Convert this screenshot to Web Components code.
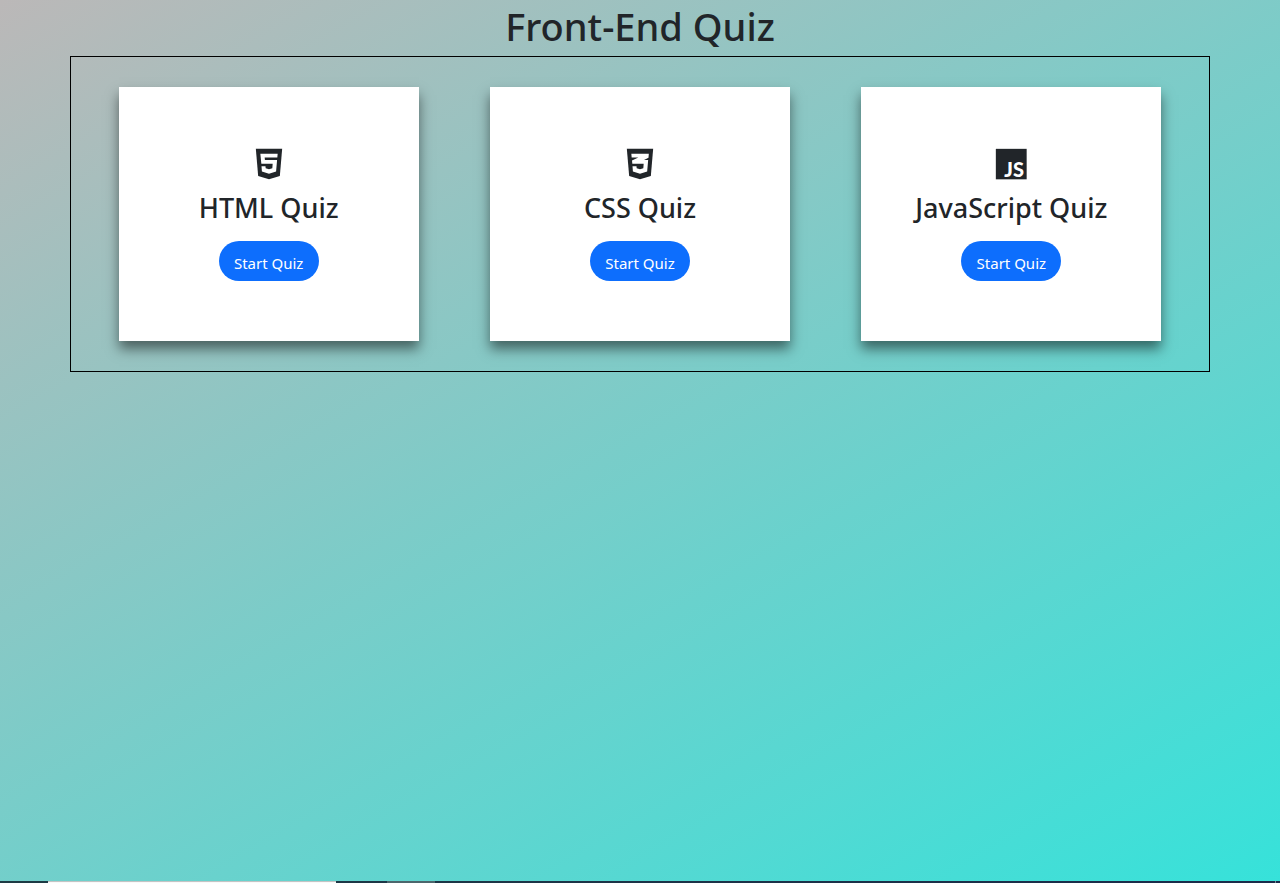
<!DOCTYPE html>
<html lang="en">
<head>
<meta charset="utf-8">
<meta name="viewport" content="width=device-width, initial-scale=1">
<title>Front-End Quiz</title>
<style>
body { margin: 0; color: #212529; font-family: "Noto Sans", "Open Sans", sans-serif; font-size: 16px; }
</style>
</head>
<body>
<quiz-app>
  <quiz-card icon="html">HTML Quiz</quiz-card>
  <quiz-card icon="css">CSS Quiz</quiz-card>
  <quiz-card icon="js">JavaScript Quiz</quiz-card>
</quiz-app>
<script>
const SHIELD = 'M4.1 2.8h15.8l-1.4 16.4-6.5 1.9-6.5-1.9z';
const ICONS = {
  html: `<path fill="currentColor" d="${SHIELD}"/><path fill="#fff" d="M6.8 5.9h10.4l-.2 2.2H9.4l.15 1.5h7.3l-.6 6.9-4.25 1.3-4.25-1.3-.25-3.1h2.4l.1 1.2 2 .6 2-.6.2-2.7H7.4z"/>`,
  css: `<path fill="currentColor" d="${SHIELD}"/><path fill="#fff" d="M6.8 5.9h10.5l-.2 2.4-2.7 1.3h2.5l-.6 6.9-4.3 1.3-4.25-1.3-.25-3.1h2.4l.1 1.2 2 .6 2-.6.2-2.7H7.4l-.2-2L11 8.1H7z"/>`,
  js: `<path fill="currentColor" d="M2.9 2.9h18.5v18.3H2.9z"/><text x="8" y="19.8" fill="#fff" font-family="Lato, sans-serif" font-weight="900" font-size="12">JS</text>`
};

class QuizIcon extends HTMLElement {
  connectedCallback() {
    const root = this.shadowRoot || this.attachShadow({ mode: 'open' });
    root.innerHTML = `
      <style>
        :host { display: block; width: 36px; height: 36px; }
        svg { display: block; width: 100%; height: 100%; }
      </style>
      <svg viewBox="1.2 1.8 21.6 21.6" aria-hidden="true">${ICONS[this.getAttribute('name')] || ''}</svg>`;
  }
}
customElements.define('quiz-icon', QuizIcon);

class QuizCard extends HTMLElement {
  connectedCallback() {
    const root = this.shadowRoot || this.attachShadow({ mode: 'open' });
    root.innerHTML = `
      <style>
        :host {
          display: flex; flex-direction: column; align-items: center; box-sizing: border-box;
          width: 100%; max-width: 300px; padding: 60px 16px;
          background: #fff; box-shadow: 0 8px 12px rgba(0, 0, 0, .5);
        }
        h3 { margin: 8px 0 16px; font-size: 27px; line-height: 34px; font-weight: 500; text-align: center; }
        button {
          width: 100px; height: 40px; padding: 4px 0 0; border: 0; border-radius: 20px;
          background: #0d6efd; color: #fff; font: inherit; font-size: 15px; cursor: pointer;
        }
      </style>
      <quiz-icon name="${this.getAttribute('icon')}"></quiz-icon>
      <h3><slot></slot></h3>
      <button type="button">Start Quiz</button>`;
  }
}
customElements.define('quiz-card', QuizCard);

class TaskStrip extends HTMLElement {
  connectedCallback() {
    const root = this.shadowRoot || this.attachShadow({ mode: 'open' });
    root.innerHTML = `
      <style>
        :host { display: flex; height: 2px; background: linear-gradient(90deg, #1e3b44, #1b2b4a); }
        .search { box-sizing: border-box; width: 288px; margin-left: 48px; background: #f9f9f9; border-top: 1px solid #c4c4c4; }
        .task { width: 48px; margin-left: 51px; background: #4c666c; }
        .edge { width: 1px; margin: 0 4px 0 auto; background: #7b8794; }
      </style>
      <div class="search"></div><div class="task"></div><div class="edge"></div>`;
  }
}
customElements.define('task-strip', TaskStrip);

class QuizApp extends HTMLElement {
  connectedCallback() {
    const root = this.shadowRoot || this.attachShadow({ mode: 'open' });
    root.innerHTML = `
      <style>
        :host {
          display: flex; flex-direction: column; min-height: 100vh;
          background: linear-gradient(150deg, #bbb8b8, #36e2da);
        }
        h1 { margin: 0 0 4px; font-size: 38px; line-height: 52px; font-weight: 500; text-align: center; }
        main {
          display: grid; grid-template-columns: repeat(3, 1fr); justify-items: center; row-gap: 30px;
          box-sizing: border-box; width: 100%; max-width: 1140px; margin: 0 auto;
          padding: 30px 12px; border: 1px solid #000;
        }
        task-strip { margin-top: auto; }
        @media (max-width: 900px) { main { grid-template-columns: 1fr; } }
      </style>
      <h1>Front-End Quiz</h1>
      <main><slot></slot></main>
      <task-strip></task-strip>`;
  }
}
customElements.define('quiz-app', QuizApp);
</script>
</body>
</html>
